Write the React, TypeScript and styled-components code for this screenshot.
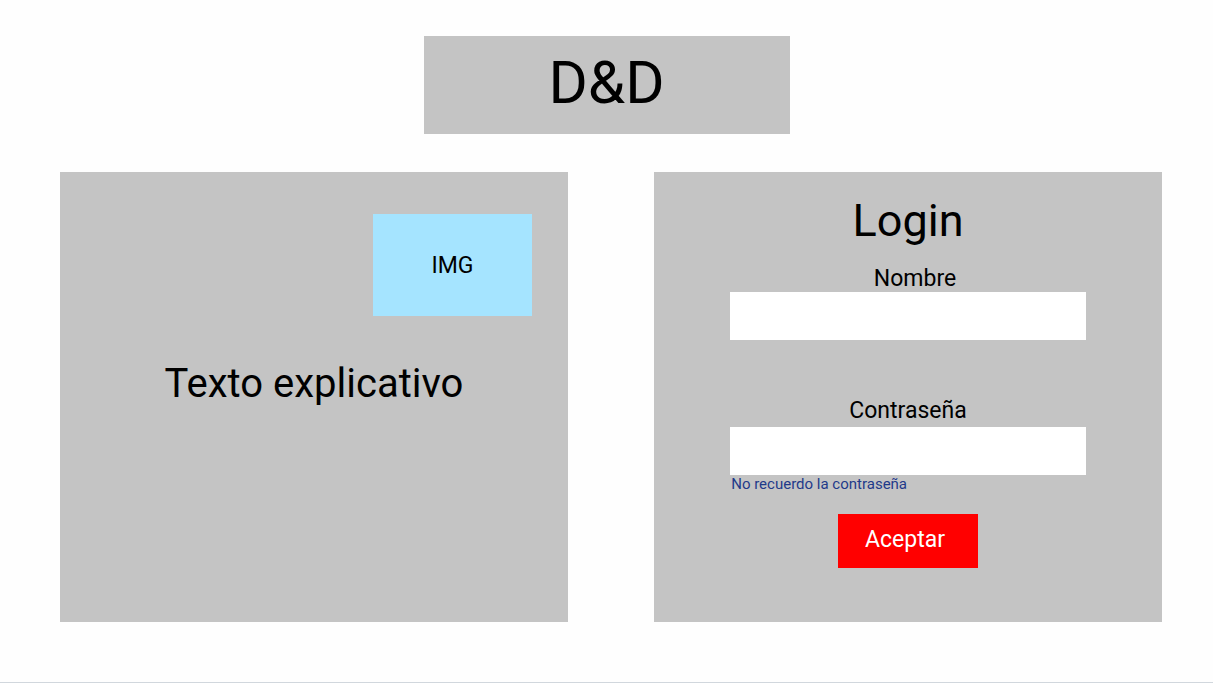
import React from "react";
import styled, { createGlobalStyle } from "styled-components";

const GlobalStyle = createGlobalStyle`
  *, *::before, *::after { box-sizing: border-box; }
  body {
    margin: 0;
    background: #fefefe;
    color: #000;
    font-family: Roboto, "Liberation Sans", sans-serif;
  }
`;

const Page = styled.div`
  display: flex;
  flex-direction: column;
  gap: 38px;
  min-height: 100vh;
  padding: 36px 0 60px;
  border-bottom: 1px solid #d1d7dd;
`;

const Banner = styled.header`
  display: flex;
  justify-content: center;
  align-self: center;
  width: 366px;
  max-width: 100%;
  padding-bottom: 4px;
  background: #c4c4c4;
`;

const Title = styled.h1`
  margin: 0;
  font-size: 60px;
  font-weight: 400;
  line-height: 94px;
`;

const Panels = styled.main`
  display: grid;
  grid-template-columns: repeat(auto-fit, minmax(400px, 1fr));
  gap: 86px;
  padding: 0 51px 0 60px;
`;

const Panel = styled.section`
  display: flex;
  flex-direction: column;
  min-height: 450px;
  background: #c4c4c4;
`;

const InfoPanel = styled(Panel)`
  gap: 44px;
  padding: 42px 36px;
`;

const LoginPanel = styled(Panel)`
  padding: 22px 15% 54px;
`;

const ImageBox = styled.div`
  display: flex;
  align-items: center;
  justify-content: center;
  align-self: flex-end;
  width: 159px;
  height: 102px;
  background: #a5e4ff;
  font-size: 23px;
  line-height: 27px;
`;

const InfoText = styled.p`
  margin: 0;
  font-size: 40px;
  line-height: 48px;
  text-align: center;
`;

const Heading = styled.h2`
  margin: 0;
  font-size: 45px;
  font-weight: 400;
  line-height: 53px;
  text-align: center;
`;

const Form = styled.form`
  display: flex;
  flex-direction: column;
  padding-top: 18px;
`;

const Field = styled.div<{ $gap?: number; $indent?: number }>`
  display: flex;
  flex-direction: column;
  gap: ${({ $gap = 0 }) => $gap}px;

  & + & {
    margin-top: 57px;
  }

  label {
    padding-left: ${({ $indent = 0 }) => $indent}px;
    font-size: 23px;
    line-height: 27px;
    text-align: center;
  }
`;

const TextInput = styled.input`
  width: 100%;
  height: 48px;
  padding: 0 12px;
  border: 0;
  border-radius: 0;
  background: #fff;
  font: inherit;
  font-size: 23px;
`;

const ForgotLink = styled.a`
  align-self: flex-start;
  padding-left: 1px;
  color: #1f3a8a;
  font-size: 15px;
  line-height: 18px;
  text-decoration: none;
`;

const SubmitButton = styled.button`
  align-self: center;
  height: 54px;
  margin-top: 21px;
  padding: 0 33px 3px 27px;
  border: 0;
  background: #f00;
  color: #fff;
  font: inherit;
  font-size: 23px;
  line-height: 27px;
  cursor: pointer;
`;

export default function App() {
  return (
    <>
      <GlobalStyle />
      <Page>
        <Banner>
          <Title>D&amp;D</Title>
        </Banner>
        <Panels>
          <InfoPanel>
            <ImageBox>IMG</ImageBox>
            <InfoText>Texto explicativo</InfoText>
          </InfoPanel>
          <LoginPanel>
            <Heading>Login</Heading>
            <Form onSubmit={(event) => event.preventDefault()}>
              <Field $indent={14}>
                <label htmlFor="nombre">Nombre</label>
                <TextInput id="nombre" type="text" autoComplete="username" />
              </Field>
              <Field $gap={3}>
                <label htmlFor="contrasena">Contraseña</label>
                <TextInput id="contrasena" type="password" autoComplete="current-password" />
              </Field>
              <ForgotLink href="#recuperar">No recuerdo la contraseña</ForgotLink>
              <SubmitButton type="submit">Aceptar</SubmitButton>
            </Form>
          </LoginPanel>
        </Panels>
      </Page>
    </>
  );
}
